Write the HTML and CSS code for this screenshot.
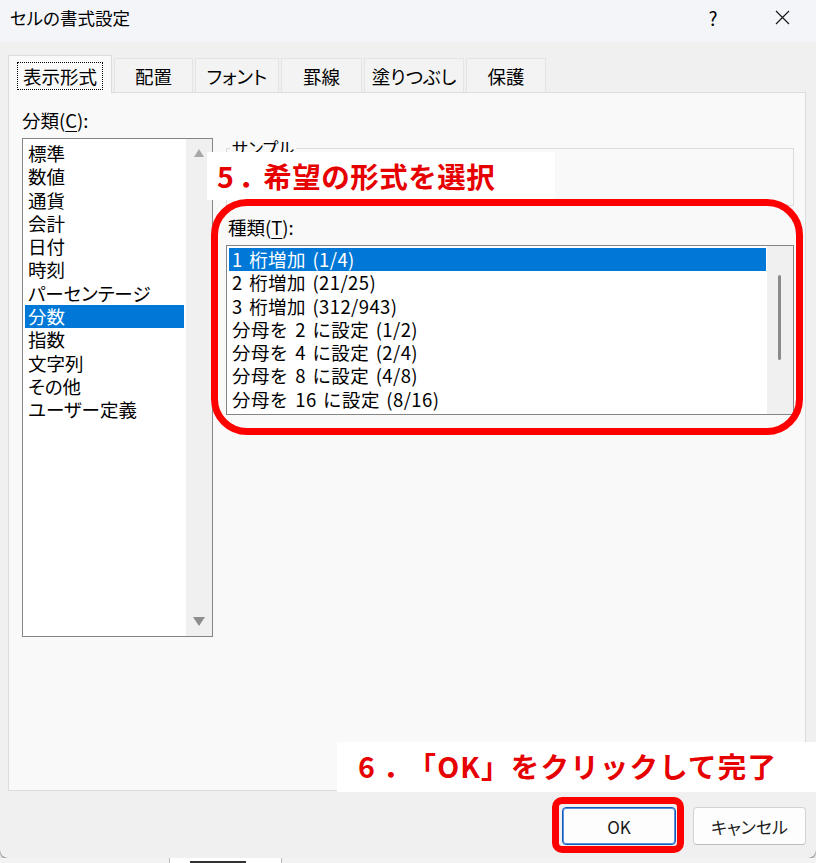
FILE: index.html
```html
<!DOCTYPE html>
<html lang="ja">
<head>
<meta charset="utf-8">
<title>セルの書式設定</title>
<link rel="stylesheet" href="styles.css">
</head>
<body>
<div class="screen">
  <div class="dialog">
    <div class="titlebar">
      <span class="title">セルの書式設定</span>
      <span class="help">?</span>
      <svg class="close" width="15" height="15" viewBox="0 0 15 15"><path d="M1 1 L14 14 M14 1 L1 14" stroke="#1a1a1a" stroke-width="1.2" fill="none"/></svg>
    </div>
    <div class="tabs">
      <div class="tab active t1"><span class="focus">表示形式</span></div>
      <div class="tab t2">配置</div>
      <div class="tab t3">フォント</div>
      <div class="tab t4">罫線</div>
      <div class="tab t5">塗りつぶし</div>
      <div class="tab t6">保護</div>
    </div>
    <div class="panel">
      <div class="col-left">
        <div class="label">分類(<u>C</u>):</div>
        <div class="listbox cat">
          <ul class="items">
            <li>標準</li>
            <li>数値</li>
            <li>通貨</li>
            <li>会計</li>
            <li>日付</li>
            <li>時刻</li>
            <li>パーセンテージ</li>
            <li class="sel">分数</li>
            <li>指数</li>
            <li>文字列</li>
            <li>その他</li>
            <li>ユーザー定義</li>
          </ul>
          <div class="vscroll arrows">
            <span class="arrow up"></span>
            <span class="arrow down"></span>
          </div>
        </div>
      </div>
      <div class="col-right">
        <fieldset class="sample"><legend>サンプル</legend></fieldset>
        <div class="label type-label">種類(<u>T</u>):</div>
        <div class="listbox types">
          <ul class="items">
            <li class="sel">1 桁増加 (1/4)</li>
            <li>2 桁増加 (21/25)</li>
            <li>3 桁増加 (312/943)</li>
            <li>分母を 2 に設定 (1/2)</li>
            <li>分母を 4 に設定 (2/4)</li>
            <li>分母を 8 に設定 (4/8)</li>
            <li>分母を 16 に設定 (8/16)</li>
          </ul>
          <div class="vscroll thin">
            <span class="thumb"></span>
          </div>
        </div>
      </div>
    </div>
    <div class="buttons">
      <button class="btn primary">OK</button>
      <button class="btn">キャンセル</button>
    </div>
  </div>
  <div class="excel">
    <div class="sheet-gap"></div>
    <div class="sheet-tab"></div>
  </div>

  <div class="note note1">5<span class="dot1">．</span>希望の形式を選択</div>
  <div class="ring ring1"></div>
  <div class="note note2">6<span class="dot2">．</span>「OK」をクリックして完了</div>
  <div class="ring ring2"></div>
</div>
</body>
</html>
```

FILE: styles.css
```css
* { box-sizing: border-box; }
html, body { margin: 0; padding: 0; }
body {
  width: 816px;
  height: 863px;
  overflow: hidden;
  background: #ececec;
  font-family: "Noto Sans CJK JP", "Noto Sans", sans-serif;
  color: #000;
}
.screen {
  position: relative;
  width: 816px;
  height: 863px;
  background: #e4e4e4;
}
.dialog {
  height: 858px;
  background: #f0f0f0;
  border-radius: 0 0 8px 8px;
  box-shadow: 0 1px 1px rgba(0, 0, 0, 0.5);
  display: flex;
  flex-direction: column;
  overflow: hidden;
}

/* title bar */
.titlebar {
  height: 42px;
  flex: none;
  background: #f3f5f9;
  display: flex;
  align-items: center;
  padding-left: 10px;
  font-size: 17.5px;
  font-feature-settings: "palt";
}
.title { flex: 1; margin-top: -8px; }
.help { width: 16px; text-align: center; margin-top: -8px; font-size: 19px; }
.close { margin-left: 54px; margin-right: 26px; margin-top: -8px; }

/* tabs */
.tabs {
  height: 51px;
  flex: none;
  display: flex;
  align-items: flex-end;
  gap: 2px;
  padding-left: 8px;
  position: relative;
  z-index: 2;
}
.tab {
  height: 34px;
  margin-bottom: 1px;
  display: flex;
  align-items: center;
  justify-content: center;
  background: #f3f3f3;
  border: 1px solid #e4e4e4;
  border-bottom: none;
  font-size: 18.5px;
  font-feature-settings: "palt";
  padding-top: 1px;
}
.tab.active {
  height: 38px;
  margin-bottom: 0;
  background: #f9f9f9;
  border-color: #dcdcdc;
  padding-top: 0;
}
.focus {
  border: 1px dotted #000;
  height: 28px;
  padding: 0 5px;
  display: flex;
  align-items: center;
  margin-top: 3px;
}
.t1 { width: 104px; }
.t2 { width: 79px; }
.t3 { width: 84px; }
.t4 { width: 81px; }
.t5 { width: 100px; }
.t6 { width: 80px; }

/* panel */
.panel {
  flex: none;
  height: 699px;
  margin: -1px 10px 0 8px;
  background: #f9f9f9;
  border: 1px solid #dcdcdc;
  display: flex;
  gap: 13px;
  padding: 0 11px 0 13px;
  position: relative;
  z-index: 1;
}
.col-left { width: 191px; padding-top: 17px; }
.col-right { width: 568px; padding-top: 45px; }
.label {
  font-size: 18.5px;
  line-height: 20px;
  white-space: nowrap;
}
.label u { text-underline-offset: 3px; text-decoration-thickness: 1px; }

.listbox {
  border: 1px solid #858585;
  background: #fff;
  display: flex;
}
.cat { margin-top: 8px; height: 499px; }
.types { margin-top: 8px; height: 170px; }
.items {
  list-style: none;
  margin: 0;
  flex: 1;
  min-width: 0;
  font-size: 18.5px;
  line-height: 23.3px;
}
.cat .items { padding: 3px 2px 0 2px; font-feature-settings: "palt"; }
.types .items { padding: 2px 1px 0 2px; word-spacing: 2px; letter-spacing: 0.4px; }
.items li { padding-left: 3px; white-space: nowrap; }
.items li.sel { background: #0078d7; color: #fff; }

.vscroll {
  width: 26px;
  flex: none;
  background: #f0f0f0;
  display: flex;
  flex-direction: column;
  align-items: center;
}
.arrows { justify-content: space-between; padding: 10px 0 10px; }
.arrow { width: 0; height: 0; }
.arrow.up {
  border-left: 5px solid transparent;
  border-right: 5px solid transparent;
  border-bottom: 8px solid #a8a8a8;
}
.arrow.down {
  border-left: 6.5px solid transparent;
  border-right: 6.5px solid transparent;
  border-top: 9px solid #8e8e8e;
}
.thin { padding-top: 29px; }
.thumb {
  width: 3px;
  height: 85px;
  background: #8a8a8a;
  border-radius: 2px;
  margin-left: -1px;
}

/* sample group */
.sample {
  margin: 0;
  padding: 0;
  height: 68px;
  border: 1px solid #dcdcdc;
  min-width: 0;
}
.sample legend {
  margin-left: 3px;
  padding: 0 2px;
  font-size: 17px;
  line-height: 20px;
  font-feature-settings: "palt";
}
.type-label { margin-top: 11px; padding-left: 2px; }

/* buttons */
.buttons {
  flex: none;
  display: flex;
  justify-content: flex-end;
  gap: 17px;
  margin-top: 16px;
  padding-right: 10px;
}
.btn {
  height: 38px;
  width: 113px;
  background: #fdfdfd;
  border: 1px solid #d3d3d3;
  border-bottom-color: #bdbdbd;
  border-radius: 4px;
  font-family: "Noto Sans CJK JP", "Noto Sans", sans-serif;
  font-size: 17px;
  font-feature-settings: "palt";
  color: #1a1a1a;
  padding: 0;
}
.btn.primary {
  width: 114px;
  border: 1px solid #0f5bbf;
  box-shadow: inset 0 0 0 1px #5d8fd6;
}

/* excel strip behind dialog */
.excel {
  height: 5px;
  display: flex;
  background: #f3f3f3;
  overflow: hidden;
}
.sheet-gap { width: 169px; }
.sheet-tab {
  width: 113px;
  background: #fff;
  border-left: 1px solid #bcbcbc;
  border-right: 1px solid #bcbcbc;
  background-image: linear-gradient(#333, #333);
  background-size: 56px 2px;
  background-repeat: no-repeat;
  background-position: 20px 3px;
}

/* annotations (overlays) */
.note {
  position: absolute;
  background: #fff;
  color: #e60000;
  font-weight: 700;
  font-size: 28.5px;
  white-space: nowrap;
  z-index: 5;
}
.note1 {
  left: 207px;
  top: 152px;
  width: 348px;
  height: 48px;
  line-height: 48px;
  padding-left: 10px;
  letter-spacing: 0.5px;
}
.dot1 { padding-left: 4px; margin-right: -4px; }
.note2 {
  left: 337px;
  top: 742px;
  width: 479px;
  height: 50px;
  line-height: 48px;
  padding-left: 21px;
  letter-spacing: 1.2px;
}
.dot2 { padding-left: 7px; margin-right: 9px; }
.ring {
  position: absolute;
  border: 7px solid #ff0000;
  z-index: 6;
}
.ring1 {
  left: 211px;
  top: 199px;
  width: 592px;
  height: 236px;
  border-radius: 36px;
}
.ring2 {
  left: 552px;
  top: 797px;
  width: 132px;
  height: 56px;
  border-radius: 10px;
}
```
